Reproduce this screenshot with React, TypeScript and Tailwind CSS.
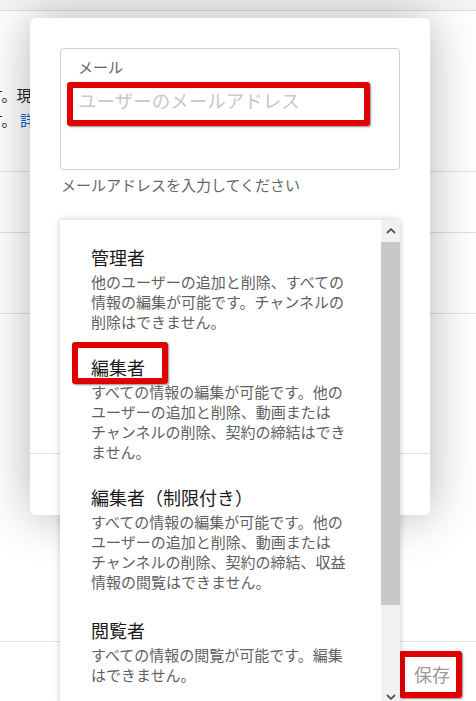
import { useState } from 'react'

const ROLES = [
  {
    title: '管理者',
    lines: ['他のユーザーの追加と削除、すべての', '情報の編集が可能です。チャンネルの', '削除はできません。'],
  },
  {
    title: '編集者',
    lines: ['すべての情報の編集が可能です。他の', 'ユーザーの追加と削除、動画または', 'チャンネルの削除、契約の締結はでき', 'ません。'],
    marked: true,
  },
  {
    title: '編集者（制限付き）',
    lines: ['すべての情報の編集が可能です。他の', 'ユーザーの追加と削除、動画または', 'チャンネルの削除、契約の締結、収益', '情報の閲覧はできません。'],
  },
  {
    title: '閲覧者',
    lines: ['すべての情報の閲覧が可能です。編集', 'はできません。'],
  },
]

function Chevron({ up }: { up?: boolean }) {
  return (
    <svg width="10" height="6" viewBox="0 0 10 6" className={up ? '' : 'rotate-180'}>
      <polyline points="1,5 5,1.2 9,5" fill="none" stroke="#505050" strokeWidth="1.8" />
    </svg>
  )
}

// 赤枠の注釈（スクリーンショット上のハイライト）
function Mark({ className }: { className: string }) {
  return (
    <div
      className={`pointer-events-none absolute rounded-[3px] border-[6px] border-[#e00000] shadow-[1px_1px_2px_rgba(0,0,0,0.45)] ${className}`}
    />
  )
}

export default function App() {
  const [email, setEmail] = useState('')

  return (
    <div className="relative h-[701px] w-[476px] overflow-hidden bg-white font-['Noto_Sans_CJK_JP',sans-serif]">
      {/* 背景のページ */}
      <div className="h-[11px] border-b border-[#dcdcdc] bg-[#f4f4f4]" />
      <div className="h-[161px] border-b border-[#e0e0e0] pt-[71px] text-[15px] leading-[25px] text-[#222]">
        <p className="-ml-[12px] whitespace-nowrap">す。現在のユーザーを管理できます</p>
        <p className="-ml-[12px] whitespace-nowrap">
          す。 <span className="text-[#065fd4]">詳細</span>
        </p>
      </div>
      <div className="h-[61px] border-b border-[#e0e0e0]" />
      <div className="h-[81px] border-b border-[#e0e0e0]" />
      <div className="h-[328px] border-b border-[#e0e0e0]" />
      <div className="flex justify-end pr-[26px] pt-[20px]">
        <span className="relative text-[18px] leading-[24px] text-[#9a9a9a]">
          保存
          <Mark className="-left-[15px] -top-[11px] h-[47px] w-[63px]" />
        </span>
      </div>

      {/* ダイアログ */}
      <div className="absolute left-[30px] top-[18px] flex h-[497px] w-[400px] flex-col rounded-[6px] bg-white shadow-[0_0_50px_rgba(0,0,0,0.3)]">
        <div className="flex-1 px-[30px] pt-[30px]">
          <div className="relative h-[122px] rounded-[4px] border border-[#cfcfcf] pl-[17px] pt-[8px]">
            <p className="text-[15px] leading-[20px] text-[#666]">メール</p>
            <input
              value={email}
              onChange={(e) => setEmail(e.target.value)}
              placeholder="ユーザーのメールアドレス"
              className="mt-[8px] h-[30px] w-[286px] bg-transparent text-[18.5px] leading-[30px] text-[#222] outline-none placeholder:text-[#c8c8c8]"
            />
            <Mark className="left-[6px] top-[33px] h-[44px] w-[303px]" />
          </div>
          <p className="mt-[5px] pl-[1px] text-[15px] leading-[20px] text-[#666]">メールアドレスを入力してください</p>
        </div>
        <div className="h-[62px] border-t border-[#e0e0e0]" />
      </div>

      {/* 権限のドロップダウン */}
      <div className="absolute left-[60px] top-[220px] flex h-[485px] w-[340px] bg-white shadow-[0_0_6px_rgba(0,0,0,0.22)]">
        <ul className="flex-1 pl-[31px] pt-[13px]">
          {ROLES.map((r, i) => (
            <li key={r.title} className={`pb-[11px] pt-[11px] ${i === 3 ? 'mt-[3px]' : ''}`}>
              <p className="relative w-fit text-[18px] leading-[26px] text-[#1a1a1a]">
                {r.title}
                {r.marked && <Mark className="-left-[19px] -top-[12px] h-[42px] w-[96px]" />}
              </p>
              <div className="mt-[2px] text-[15px] leading-[20px] text-[#5f5f5f]">
                {r.lines.map((l) => (
                  <p key={l} className="whitespace-nowrap">
                    {l}
                  </p>
                ))}
              </div>
            </li>
          ))}
        </ul>
        <div className="flex w-[19px] flex-col bg-[#f1f1f1]">
          <div className="flex h-[22px] items-center justify-center">
            <Chevron up />
          </div>
          <div className="h-[363px] bg-[#c8c8c8]" />
          <div className="flex-1" />
          <div className="flex h-[16px] items-center justify-center">
            <Chevron />
          </div>
        </div>
      </div>
    </div>
  )
}
